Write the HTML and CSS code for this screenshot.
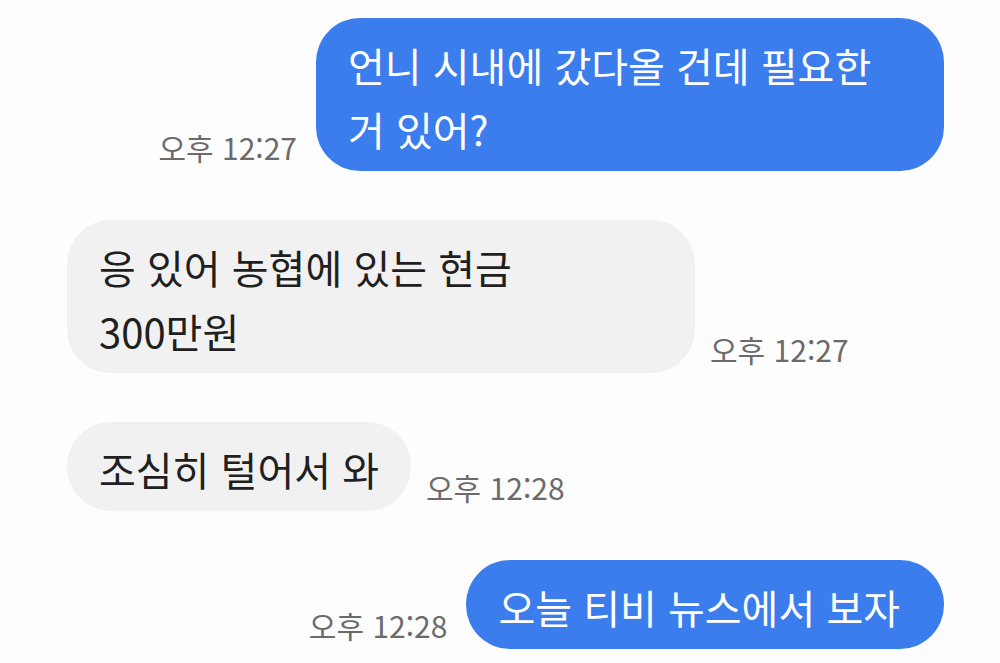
FILE: index.html
```html
<!DOCTYPE html>
<html lang="ko">
<head>
    <meta charset="UTF-8">
    <meta name="viewport" content="width=device-width, initial-scale=1.0">
    <title>대화</title>
    <link rel="stylesheet" href="styles.css">
</head>
<body>
    <main class="chat">
        <div class="row sent">
            <span class="time">오후 12:27</span>
            <p class="bubble full">언니 시내에 갔다올 건데 필요한<br>거 있어?</p>
        </div>
        <div class="row received">
            <p class="bubble full">응 있어 농협에 있는 현금<br>300만원</p>
            <span class="time">오후 12:27</span>
        </div>
        <div class="row received">
            <p class="bubble">조심히 털어서 와</p>
            <span class="time">오후 12:28</span>
        </div>
        <div class="row sent">
            <span class="time">오후 12:28</span>
            <p class="bubble">오늘 티비 뉴스에서 보자</p>
        </div>
    </main>
</body>
</html>
```

FILE: styles.css
```css
body {
    margin: 0;
    padding: 0;
    background-color: #fdfdfd;
    font-family: "Noto Sans CJK KR", "Noto Sans", sans-serif;
}
.chat {
    display: flex;
    flex-direction: column;
    gap: 49px;
    padding: 18px 56px 0 67px;
}
.row {
    display: flex;
    align-items: flex-end;
    gap: 15px;
}
.row.sent {
    justify-content: flex-end;
    gap: 19px;
}
.bubble {
    margin: 0;
    box-sizing: border-box;
    max-width: 628px;
    padding: 15px 32px 10px;
    border-radius: 44px;
    font-size: 40px;
    line-height: 64px;
    white-space: nowrap;
}
.bubble.full {
    width: 628px;
}
.sent .bubble {
    padding-right: 44px;
    background-color: #3b7ded;
    color: #fff;
}
.received .bubble {
    background-color: #f1f1f1;
    color: #1f1f1f;
}
.time {
    font-size: 30px;
    line-height: 36px;
    color: #6b6b6b;
    margin-bottom: 6px;
    white-space: nowrap;
}
```
